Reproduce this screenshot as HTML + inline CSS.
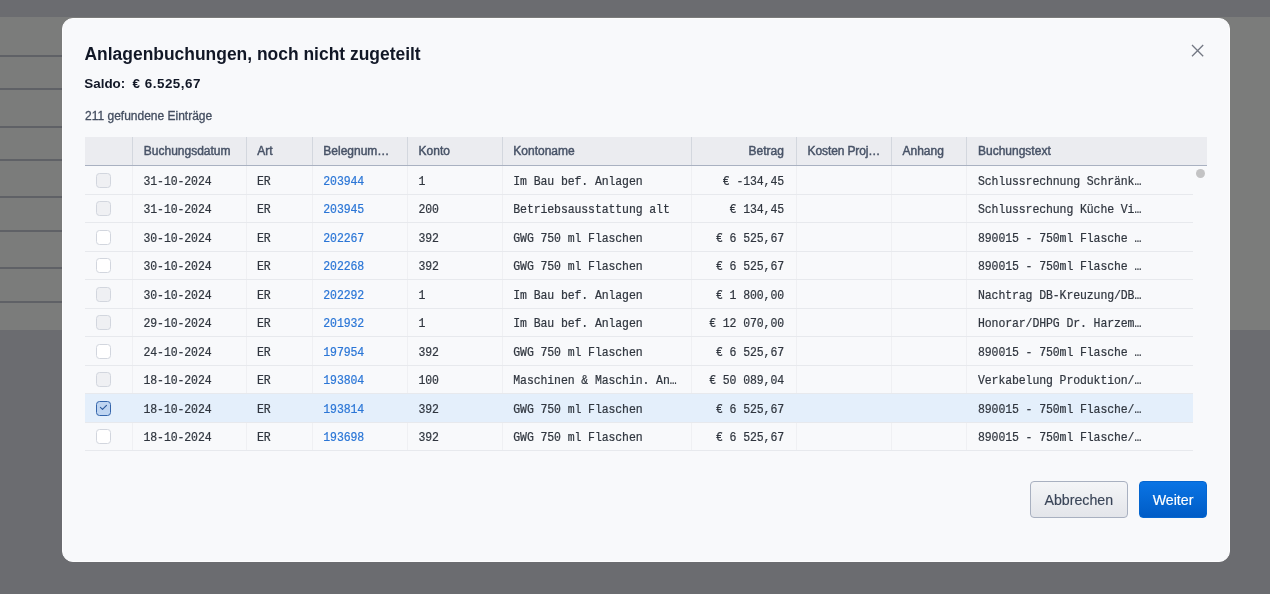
<!DOCTYPE html>
<html><head><meta charset="utf-8">
<style>
html,body{margin:0;padding:0}
body{width:1270px;height:594px;overflow:hidden;position:relative;will-change:transform;background:#6b6c70;font-family:"Liberation Sans",sans-serif}
.page{position:absolute;left:0;top:17px;width:1270px;height:313px;background:#7b7c7b}
.pl{position:absolute;left:0;width:70px;height:2px;background:#5f6166}
.modal{position:absolute;left:62px;top:18px;width:1168px;height:544px;box-sizing:border-box;border-radius:11px;background:#f8f9fb;border:1px solid #fdfdfe}
.abs{position:absolute;white-space:nowrap}
.title{left:84.5px;top:45.9px;font-size:17.45px;line-height:17.45px;font-weight:bold;color:#111726}
.saldo{top:77px;font-size:13.4px;line-height:13.4px;font-weight:bold;color:#111726}
.count{left:85px;top:109.8px;font-size:12px;line-height:12px;color:#444e60;-webkit-text-stroke:0.3px #444e60}
.close{left:1188px;top:41px;width:19px;height:19px}
.thead{position:absolute;left:84.5px;top:137px;width:1122.5px;height:28.3px;background:#ebecf0;border-bottom:1.2px solid #a9b1c1}
.hd{position:absolute;top:137px;height:28.3px;width:1px;background:#d3d7de}
.th{position:absolute;top:145px;font-size:12px;line-height:12px;color:#485367;white-space:nowrap;-webkit-text-stroke:0.45px #485367}
.tbody{position:absolute;left:84.5px;top:0;width:1108.5px;height:594px}
.bd{position:absolute;top:166px;height:285px;width:1px;background:#eff0f3}
.row{position:absolute;left:84.5px;width:1108.5px;height:28.5px;box-sizing:border-box;border-bottom:1px solid #e7e9ed}
.row.sel{background:#e4effb}
.t{position:absolute;top:9.7px;font-family:"Liberation Mono",monospace;font-size:11.5px;line-height:11.5px;letter-spacing:-0.1px;transform:scaleY(1.18);transform-origin:0 8.8px;color:#30363f;white-space:nowrap;-webkit-text-stroke:0.2px #30363f}
.t.lk{color:#2b76d6;-webkit-text-stroke-color:#2b76d6}
.cb{position:absolute;left:11.5px;top:6.5px;width:15px;height:15px;box-sizing:border-box;border:1.1px solid #d2d6de;border-radius:3.5px;background:#ffffff}
.cb.cbg{background:#eff0f3}
.cb.cbc{background:#bfd5f1;border:1.6px solid #3465ab}
.cb svg{position:absolute;left:-1.5px;top:-1.5px}
.thumb{position:absolute;left:1195.8px;top:168.7px;width:9px;height:9px;border-radius:50%;background:#c3c3c4}
.btn{position:absolute;top:481px;height:37px;box-sizing:border-box;border-radius:4px;font-size:14.2px;line-height:36.2px;text-align:center;-webkit-text-stroke:0.15px currentColor}
.b1{left:1030px;width:97.5px;border:1px solid #a8b0c0;background:linear-gradient(#f4f5f7,#e3e5ea);color:#3a4558}
.b2{left:1138.6px;width:68.8px;border:1px solid #0566d0;background:linear-gradient(#0a74e4,#005cc6);color:#ffffff}
</style></head><body>
<div class="page"><div class="pl" style="top:37.5px"></div><div class="pl" style="top:71px"></div><div class="pl" style="top:108.5px"></div><div class="pl" style="top:141.5px"></div><div class="pl" style="top:179px"></div><div class="pl" style="top:212.5px"></div><div class="pl" style="top:250px"></div><div class="pl" style="top:283.5px"></div></div>
<div class="modal"></div>
<div class="abs title">Anlagenbuchungen, noch nicht zugeteilt</div>
<div class="abs saldo" style="left:84.3px">Saldo:</div>
<div class="abs saldo" style="left:132.5px;letter-spacing:0.52px">€ 6.525,67</div>
<div class="abs count">211 gefundene Einträge</div>
<svg class="abs close" viewBox="0 0 19 19"><path d="M4 4 L15.2 15.2 M15.2 4 L4 15.2" stroke="#737883" stroke-width="1.3" fill="none"/></svg>
<div class="thead"></div>
<div class="hd" style="left:132px"></div><div class="hd" style="left:246px"></div><div class="hd" style="left:312px"></div><div class="hd" style="left:407px"></div><div class="hd" style="left:502px"></div><div class="hd" style="left:691px"></div><div class="hd" style="left:796px"></div><div class="hd" style="left:891px"></div><div class="hd" style="left:966px"></div>
<span class="th" style="left:143.8px">Buchungsdatum</span>
<span class="th" style="left:257.2px">Art</span>
<span class="th" style="left:323.3px">Belegnum…</span>
<span class="th" style="left:418.6px">Konto</span>
<span class="th" style="left:513.3px">Kontoname</span>
<span class="th" style="left:748.5px">Betrag</span>
<span class="th" style="left:807.6px;letter-spacing:-0.12px">Kosten Proj…</span>
<span class="th" style="left:902.5px">Anhang</span>
<span class="th" style="left:978px">Buchungstext</span>
<div class="bd" style="left:132px"></div><div class="bd" style="left:246px"></div><div class="bd" style="left:312px"></div><div class="bd" style="left:407px"></div><div class="bd" style="left:502px"></div><div class="bd" style="left:691px"></div><div class="bd" style="left:796px"></div><div class="bd" style="left:891px"></div><div class="bd" style="left:966px"></div>
<div class="row" style="top:166.2px">
<div class="cb cbg"></div>
<span class="t" style="left:59px">31-10-2024</span>
<span class="t" style="left:172.5px">ER</span>
<span class="t lk" style="left:238.8px">203944</span>
<span class="t" style="left:334px">1</span>
<span class="t" style="left:428.8px">Im Bau bef. Anlagen</span>
<span class="t ra" style="right:409px">€ -134,45</span>
<span class="t" style="left:893.5px">Schlussrechnung Schränk…</span>
</div><div class="row" style="top:194.7px">
<div class="cb cbg"></div>
<span class="t" style="left:59px">31-10-2024</span>
<span class="t" style="left:172.5px">ER</span>
<span class="t lk" style="left:238.8px">203945</span>
<span class="t" style="left:334px">200</span>
<span class="t" style="left:428.8px">Betriebsausstattung alt</span>
<span class="t ra" style="right:409px">€ 134,45</span>
<span class="t" style="left:893.5px">Schlussrechung Küche Vi…</span>
</div><div class="row" style="top:223.2px">
<div class="cb"></div>
<span class="t" style="left:59px">30-10-2024</span>
<span class="t" style="left:172.5px">ER</span>
<span class="t lk" style="left:238.8px">202267</span>
<span class="t" style="left:334px">392</span>
<span class="t" style="left:428.8px">GWG 750 ml Flaschen</span>
<span class="t ra" style="right:409px">€ 6 525,67</span>
<span class="t" style="left:893.5px">890015 - 750ml Flasche …</span>
</div><div class="row" style="top:251.7px">
<div class="cb"></div>
<span class="t" style="left:59px">30-10-2024</span>
<span class="t" style="left:172.5px">ER</span>
<span class="t lk" style="left:238.8px">202268</span>
<span class="t" style="left:334px">392</span>
<span class="t" style="left:428.8px">GWG 750 ml Flaschen</span>
<span class="t ra" style="right:409px">€ 6 525,67</span>
<span class="t" style="left:893.5px">890015 - 750ml Flasche …</span>
</div><div class="row" style="top:280.2px">
<div class="cb cbg"></div>
<span class="t" style="left:59px">30-10-2024</span>
<span class="t" style="left:172.5px">ER</span>
<span class="t lk" style="left:238.8px">202292</span>
<span class="t" style="left:334px">1</span>
<span class="t" style="left:428.8px">Im Bau bef. Anlagen</span>
<span class="t ra" style="right:409px">€ 1 800,00</span>
<span class="t" style="left:893.5px">Nachtrag DB-Kreuzung/DB…</span>
</div><div class="row" style="top:308.7px">
<div class="cb cbg"></div>
<span class="t" style="left:59px">29-10-2024</span>
<span class="t" style="left:172.5px">ER</span>
<span class="t lk" style="left:238.8px">201932</span>
<span class="t" style="left:334px">1</span>
<span class="t" style="left:428.8px">Im Bau bef. Anlagen</span>
<span class="t ra" style="right:409px">€ 12 070,00</span>
<span class="t" style="left:893.5px">Honorar/DHPG Dr. Harzem…</span>
</div><div class="row" style="top:337.2px">
<div class="cb"></div>
<span class="t" style="left:59px">24-10-2024</span>
<span class="t" style="left:172.5px">ER</span>
<span class="t lk" style="left:238.8px">197954</span>
<span class="t" style="left:334px">392</span>
<span class="t" style="left:428.8px">GWG 750 ml Flaschen</span>
<span class="t ra" style="right:409px">€ 6 525,67</span>
<span class="t" style="left:893.5px">890015 - 750ml Flasche …</span>
</div><div class="row" style="top:365.7px">
<div class="cb cbg"></div>
<span class="t" style="left:59px">18-10-2024</span>
<span class="t" style="left:172.5px">ER</span>
<span class="t lk" style="left:238.8px">193804</span>
<span class="t" style="left:334px">100</span>
<span class="t" style="left:428.8px">Maschinen &amp; Maschin. An…</span>
<span class="t ra" style="right:409px">€ 50 089,04</span>
<span class="t" style="left:893.5px">Verkabelung Produktion/…</span>
</div><div class="row sel" style="top:394.2px">
<div class="cb cbc"><svg width="15" height="15" viewBox="0 0 15 15"><path d="M4.4 7.4 L6.5 9.3 L10.5 5.3" fill="none" stroke="#2c5a9c" stroke-width="1.1" stroke-linecap="round" stroke-linejoin="round"/></svg></div>
<span class="t" style="left:59px">18-10-2024</span>
<span class="t" style="left:172.5px">ER</span>
<span class="t lk" style="left:238.8px">193814</span>
<span class="t" style="left:334px">392</span>
<span class="t" style="left:428.8px">GWG 750 ml Flaschen</span>
<span class="t ra" style="right:409px">€ 6 525,67</span>
<span class="t" style="left:893.5px">890015 - 750ml Flasche/…</span>
</div><div class="row" style="top:422.7px">
<div class="cb"></div>
<span class="t" style="left:59px">18-10-2024</span>
<span class="t" style="left:172.5px">ER</span>
<span class="t lk" style="left:238.8px">193698</span>
<span class="t" style="left:334px">392</span>
<span class="t" style="left:428.8px">GWG 750 ml Flaschen</span>
<span class="t ra" style="right:409px">€ 6 525,67</span>
<span class="t" style="left:893.5px">890015 - 750ml Flasche/…</span>
</div>
<div class="thumb"></div>
<div class="btn b1">Abbrechen</div>
<div class="btn b2">Weiter</div>
</body></html>
